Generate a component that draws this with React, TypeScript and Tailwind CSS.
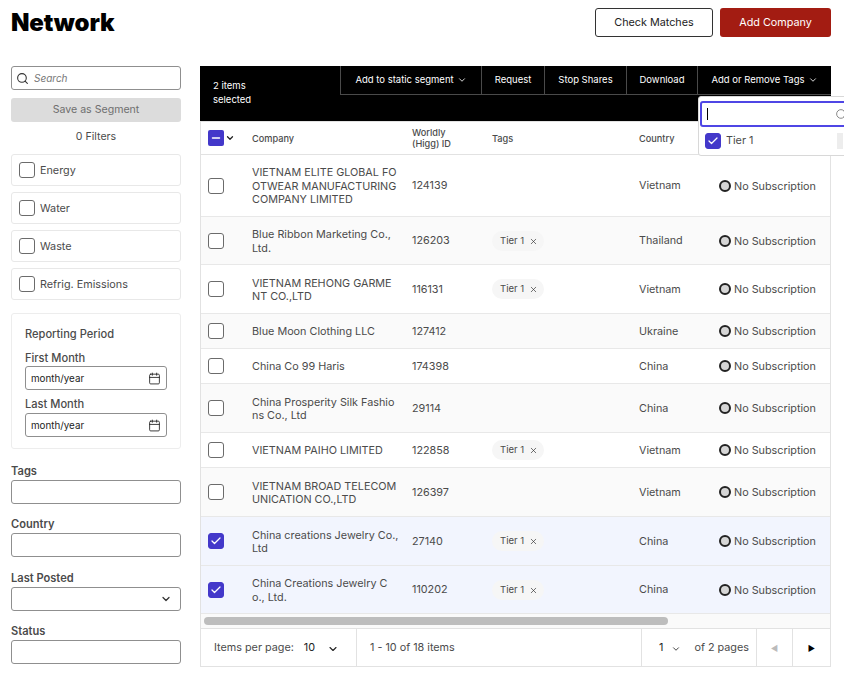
import React from "react";
import { Search, ChevronDown, Calendar, Check, X, Minus } from "lucide-react";

const Box = ({ checked = false }: { checked?: boolean }) => (
  <div className={`w-4 h-4 rounded-[3px] flex items-center justify-center shrink-0 border ${checked ? "bg-[#4338ca] border-[#4338ca]" : "bg-white border-[#6b6b6b]"}`}>
    {checked && <Check size={12} strokeWidth={2.5} className="text-white" />}
  </div>
);

const Filter = ({ label }: { label: string }) => (
  <div className="h-8 rounded-[3px] border border-[#e8e8e8] flex items-center pl-[7px] gap-[5px] text-[10.8px] text-[#4b4b4b]">
    <Box />
    <span className="pt-[2px]">{label}</span>
  </div>
);

const Field = ({ label, select = false, mt }: { label: string; select?: boolean; mt: string }) => (
  <div className={mt}>
    <div className="text-[11.1px] leading-[14px] font-semibold text-[#4b4b4b] mb-[2px]">{label}</div>
    <div className="h-6 rounded-[3px] border border-[#8f8f8f] flex items-center justify-end pr-2">
      {select && <ChevronDown size={12} strokeWidth={2.5} className="text-[#333]" />}
    </div>
  </div>
);

const MonthInput = ({ label, outer, gap }: { label: string; outer: string; gap: string }) => (
  <div className={outer}>
    <div className={`text-[11.1px] leading-[14px] font-medium text-[#4b4b4b] ${gap}`}>{label}</div>
    <div className="h-6 rounded-[3px] border border-[#8f8f8f] flex items-center justify-between pl-[5px] pr-[5px] text-[9.8px] text-[#222]">
      <span className="pt-[2px]">month/year</span>
      <Calendar size={13} strokeWidth={1.6} className="text-[#222]" />
    </div>
  </div>
);

type Row = { h: string; name: React.ReactNode; id: string; tag?: boolean; country: string; sel?: boolean };

const rows: Row[] = [
  { h: "h-[62px]", name: <>VIETNAM ELITE GLOBAL FO<br />OTWEAR MANUFACTURING<br />COMPANY LIMITED</>, id: "124139", country: "Vietnam" },
  { h: "h-[48px]", name: <>Blue Ribbon Marketing Co.,<br />Ltd.</>, id: "126203", tag: true, country: "Thailand" },
  { h: "h-[49px]", name: <>VIETNAM REHONG GARME<br />NT CO.,LTD</>, id: "116131", tag: true, country: "Vietnam" },
  { h: "h-[35px]", name: "Blue Moon Clothing LLC", id: "127412", country: "Ukraine" },
  { h: "h-[35px]", name: "China Co 99 Haris", id: "174398", country: "China" },
  { h: "h-[49px]", name: <>China Prosperity Silk Fashio<br />ns Co., Ltd</>, id: "29114", country: "China" },
  { h: "h-[35px]", name: "VIETNAM PAIHO LIMITED", id: "122858", tag: true, country: "Vietnam" },
  { h: "h-[49px]", name: <>VIETNAM BROAD TELECOM<br />UNICATION CO.,LTD</>, id: "126397", country: "Vietnam" },
  { h: "h-[49px]", name: <>China creations Jewelry Co.,<br />Ltd</>, id: "27140", tag: true, country: "China", sel: true },
  { h: "h-[48px]", name: <>China Creations Jewelry C<br />o., Ltd.</>, id: "110202", tag: true, country: "China", sel: true },
];

const Action = ({ children, w }: { children: React.ReactNode; w: string }) => (
  <div className={`${w} h-[29px] border-l border-b border-[#4a4a4a] flex items-center justify-center gap-[3px] whitespace-nowrap`}>{children}</div>
);

export default function App() {
  return (
    <div className="relative w-[844px] h-[679px] overflow-hidden bg-white font-['Inter',sans-serif]">
      <header className="h-[66px] pl-[11px] pr-[13px] flex items-start justify-between">
        <h1 className="text-[24px] leading-[46px] font-black text-black tracking-[-0.005em]">Network</h1>
        <div className="flex gap-[7px] pt-2">
          <div className="w-[118px] h-[29px] rounded-[3px] border border-[#333] flex items-center justify-center pt-[2px] text-[10.8px] text-[#222]">Check Matches</div>
          <div className="w-[111px] h-[29px] rounded-[3px] bg-[#a31c12] flex items-center justify-center pt-[2px] text-[10.8px] text-white">Add Company</div>
        </div>
      </header>

      <div className="flex pl-[11px] gap-[19px]">
        <aside className="w-[170px] shrink-0">
          <div className="h-6 rounded-[3px] border border-[#8f8f8f] flex items-center pl-1 gap-[5px]">
            <Search size={13} strokeWidth={2} className="text-[#333]" />
            <span className="text-[10px] italic text-[#777] pt-[1px]">Search</span>
          </div>
          <div className="mt-2 h-6 rounded-[3px] bg-[#dcdcdc] flex items-center justify-center text-[10.6px] text-[#6f6f6f]">Save as Segment</div>
          <div className="mt-[4px] h-5 flex items-center justify-center pt-[2px] text-[10.6px] text-[#4b4b4b]">0 Filters</div>
          <div className="mt-[8px] flex flex-col gap-[6px]">
            <Filter label="Energy" />
            <Filter label="Water" />
            <Filter label="Waste" />
            <Filter label="Refrig. Emissions" />
          </div>
          <div className="mt-[13px] h-[136px] rounded-[3px] border border-[#ededed] px-[13px] pt-[13px]">
            <div className="text-[11.1px] leading-[14px] font-medium text-[#4b4b4b]">Reporting Period</div>
            <MonthInput label="First Month" outer="mt-[10px]" gap="mb-[1px]" />
            <MonthInput label="Last Month" outer="mt-[7px]" gap="mb-[2px]" />
          </div>
          <Field label="Tags" mt="mt-[15px]" />
          <Field label="Country" mt="mt-[13px]" />
          <Field label="Last Posted" select mt="mt-[14px]" />
          <Field label="Status" mt="mt-[13px]" />
        </aside>

        <main className="w-[631px] shrink-0 text-[10.8px] text-[#4b4b4b]">
          <div className="h-[55px] bg-black text-white text-[9.5px] flex items-start">
            <div className="w-[140px] pl-[13px] pt-[13px] leading-[14px]">2 items<br />selected</div>
            <Action w="w-[141px]">Add to static segment <ChevronDown size={10} strokeWidth={2} /></Action>
            <Action w="w-[63px]">Request</Action>
            <Action w="w-[82px]">Stop Shares</Action>
            <Action w="w-[71px]">Download</Action>
            <Action w="w-[134px]">Add or Remove Tags <ChevronDown size={10} strokeWidth={2} /></Action>
          </div>

          <div className="border-x border-[#e2e2e2]">
            <div className="h-[34px] border-t border-b border-[#e2e2e2] flex items-center text-[9.2px] font-medium leading-[11px]">
              <div className="w-[51px] pl-[7px] flex items-center gap-[1px]">
                <div className="w-4 h-4 rounded-[2px] bg-[#4338ca] flex items-center justify-center"><Minus size={12} strokeWidth={3} className="text-white" /></div>
                <ChevronDown size={10} strokeWidth={3} className="text-[#222]" />
              </div>
              <div className="w-[160px]">Company</div>
              <div className="w-[80px]">Worldly<br />(Higg) ID</div>
              <div className="w-[147px]">Tags</div>
              <div className="w-[80px]">Country</div>
            </div>

            {rows.map((r, i) => (
              <div key={i} className={`${r.h} border-b border-[#e8e8e8] flex items-center ${r.sel ? "bg-[#f2f5fe]" : i % 2 === 1 ? "bg-[#fafafa]" : "bg-white"}`}>
                <div className="w-[51px] pl-[7px]"><Box checked={r.sel} /></div>
                <div className="w-[160px] leading-[13.5px] whitespace-nowrap pt-[2px]">{r.name}</div>
                <div className="w-[80px] pt-[2px]">{r.id}</div>
                <div className="w-[147px]">
                  {r.tag && (
                    <div className="inline-flex items-center h-5 w-[52px] rounded-full bg-[#f6f6f6] pl-2 pt-[1px] gap-[5px] text-[9.5px]">
                      Tier 1 <X size={9} strokeWidth={1.8} className="text-[#333]" />
                    </div>
                  )}
                </div>
                <div className="w-[80px] pt-[2px]">{r.country}</div>
                <div className="flex items-center gap-[3px] whitespace-nowrap">
                  <span className="w-3 h-3 rounded-full border-2 border-[#222] bg-[#d6d6d6] shrink-0" />
                  <span className="pt-[3px]">No Subscription</span>
                </div>
              </div>
            ))}

            <div className="h-[14px] bg-[#fafafa] flex items-center px-[3px]">
              <div className="w-[464px] h-2 rounded-full bg-[#bdbdbd]" />
            </div>
            <div className="h-[39px] border-y border-[#e2e2e2] flex items-center whitespace-nowrap">
              <div className="w-[156px] h-full pl-[13px] pt-[2px] flex items-center border-r border-[#e2e2e2]">
                Items per page:
                <span className="ml-[10px] text-[#222]">10</span>
                <ChevronDown size={12} strokeWidth={2.2} className="ml-[12px] text-[#222]" />
              </div>
              <div className="flex-1 pl-[13px] pt-[2px]">1 - 10 of 18 items</div>
              <div className="w-[115px] h-full pl-[17px] pt-[2px] flex items-center border-l border-[#e2e2e2]">
                <span className="text-[#222]">1</span>
                <ChevronDown size={10} strokeWidth={2} className="ml-[8px] text-[#222]" />
                <span className="ml-[13px]">of 2 pages</span>
              </div>
              <div className="w-[36px] h-full flex items-center justify-center border-l border-[#e2e2e2] text-[8px] text-[#bbb]">◀</div>
              <div className="w-[38px] h-full flex items-center justify-center border-l border-[#e2e2e2] text-[8px] text-black">▶</div>
            </div>
          </div>
        </main>
      </div>

      <div className="absolute left-[698px] top-[96px] w-[170px] h-[60px] bg-white border border-[#d8d8d8] rounded-[3px] pl-[1px] pr-[2px] pt-[4px]">
        <div className="h-[26px] rounded-[3px] border-2 border-[#4f46e5] flex items-center pl-[5px] justify-between">
          <span className="w-px h-3 bg-black" />
          <Search size={13} strokeWidth={1.6} className="text-[#777] mr-[15px]" />
        </div>
        <div className="flex items-center mt-[5px] pl-[5px] gap-[5px] text-[10.8px] text-[#4b4b4b]">
          <Box checked />
          <span className="pt-[1px]">Tier 1</span>
          <span className="ml-[79px] w-[6px] h-4 bg-[#ededed]" />
        </div>
      </div>
    </div>
  );
}
